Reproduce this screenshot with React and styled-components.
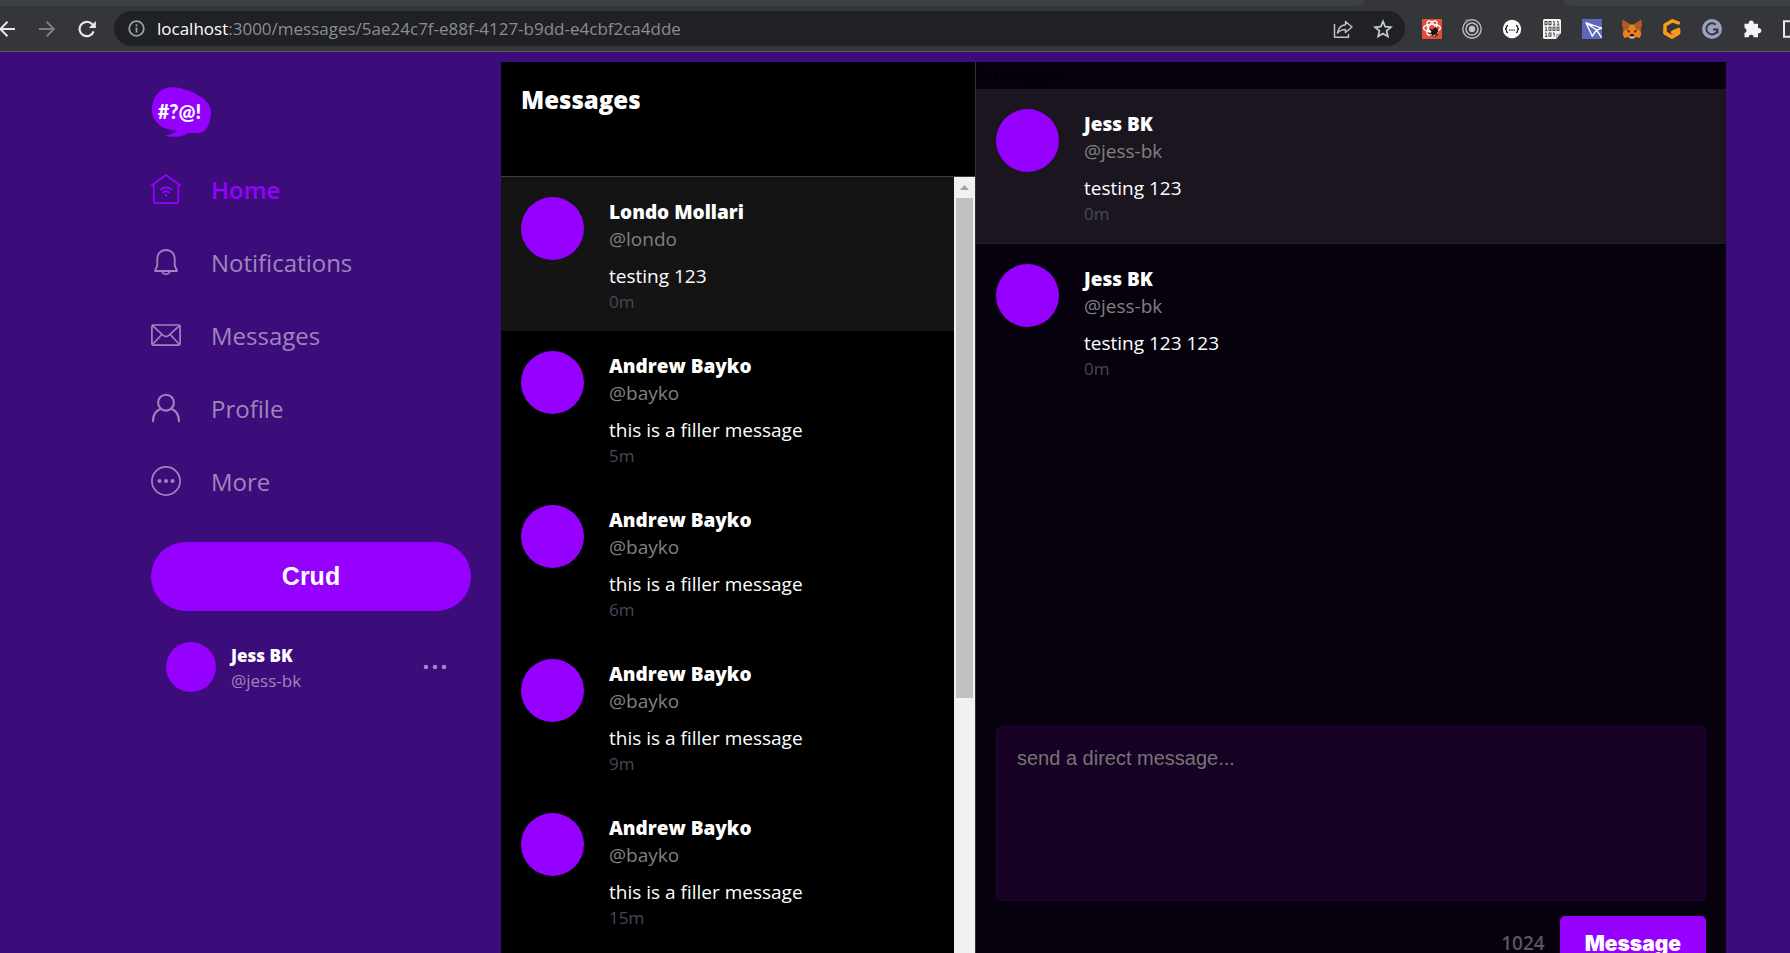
import React from "react";
import styled, { createGlobalStyle } from "styled-components";

const SANS = `"Segoe UI", "Open Sans", "Noto Sans", sans-serif`;
const ARIAL = `Arial, "Liberation Sans", sans-serif`;
const PURPLE = "#9500ff";

const GlobalStyle = createGlobalStyle`
  *, *::before, *::after { box-sizing: border-box; }
  body {
    margin: 0;
    overflow: hidden;
    background: #3c0c7a;
    font-family: ${SANS};
    font-size: 19px;
    line-height: 27px;
    color: #000;
  }
  h1, h2, p { margin: 0; }
  button { border: 0; padding: 0; background: none; cursor: pointer; }
  svg { display: block; flex: none; }
`;

/* ---------- browser chrome ---------- */

const Chrome = styled.header`
  background: #35363a;
  border-bottom: 1px solid #5f6064;
`;

const TabStrip = styled.div`
  display: grid;
  grid-template-columns: 1365fr 198fr 227fr;
  height: 6px;
`;

const InactiveTabs = styled.div`
  background: #3c4043;
  border-radius: ${(p) => (p.$side === "left" ? "0 0 8px 0" : "0 0 0 8px")};
`;

const Toolbar = styled.div`
  display: flex;
  align-items: center;
  height: 45px;
`;

const NavButtons = styled.div`
  display: flex;
  gap: 22px;
  margin-right: 18px;
`;

const IconButton = styled.button`
  color: ${(p) => p.$color || "#e8eaed"};
`;

const AddressBar = styled.div`
  flex: 1;
  min-width: 0;
  display: flex;
  align-items: center;
  height: 35px;
  padding: 0 12px 0 14px;
  border-radius: 18px;
  background: #202124;
  color: #9aa0a6;
`;

const Url = styled.p`
  flex: 1;
  min-width: 0;
  margin-left: 12px;
  overflow: hidden;
  white-space: nowrap;
  font-size: 17px;
  line-height: 24px;
  color: #8b8d90;
`;

const Host = styled.span`
  color: #fff;
`;

const AddressActions = styled.div`
  display: flex;
  gap: 20px;
`;

const Extensions = styled.div`
  display: flex;
  gap: 20px;
  margin-left: 17px;
`;

/* ---------- page ---------- */

const Page = styled.div`
  height: 100vh;
  overflow: hidden;
`;

const Columns = styled.div`
  display: grid;
  grid-template-columns: minmax(0, 437fr) minmax(0, 474fr) minmax(0, 751fr);
  height: calc(100vh - 32px);
  margin: 10px 64px 0;
`;

const Sidebar = styled.aside`
  padding: 25px 30px 0 87px;
`;

const Nav = styled.nav`
  display: flex;
  flex-direction: column;
  margin-top: 16px;
`;

const NavLink = styled.a`
  display: flex;
  align-items: center;
  gap: 30px;
  height: 73px;
  font-size: 24px;
  font-weight: ${(p) => (p.$active ? 600 : 400)};
  color: ${(p) => (p.$active ? PURPLE : "#9e86bc")};
  text-decoration: none;

  svg { margin-bottom: 2px; }
`;

const PostButton = styled.button`
  width: 100%;
  height: 69px;
  margin-top: 24px;
  border-radius: 35px;
  background: ${PURPLE};
  color: #fff;
  font: bold 25px/27px ${ARIAL};
`;

const Account = styled.div`
  display: flex;
  align-items: center;
  gap: 15px;
  margin-top: 30px;
  padding: 0 24px 0 15px;
`;

const Avatar = styled.div`
  flex: none;
  width: ${(p) => p.$size}px;
  height: ${(p) => p.$size}px;
  border-radius: 50%;
  background: ${PURPLE};
`;

const Details = styled.div`
  flex: 1;
  min-width: 0;
  padding-top: 2px;
`;

const AccountDetails = styled(Details)`
  font-size: 17px;
  line-height: 25px;
`;

const Name = styled.p`
  font-weight: 800;
  color: #fff;
`;

const Handle = styled.p`
  color: ${(p) => p.$color || "#808080"};
`;

const Inbox = styled.section`
  display: flex;
  flex-direction: column;
  min-height: 0;
  background: #000;
`;

const InboxHeader = styled.header`
  flex: none;
  height: 115px;
  padding: 20px;
  border-bottom: 1px solid #38404d;
`;

const InboxTitle = styled.h1`
  font-size: 24px;
  line-height: 36px;
  font-weight: 800;
  color: #fff;
`;

const InboxBody = styled.div`
  flex: 1;
  min-height: 0;
  display: flex;
`;

const List = styled.ul`
  flex: 1;
  min-width: 0;
  margin: 0;
  padding: 0;
  overflow: hidden;
  list-style: none;
`;

const Item = styled.li`
  display: flex;
  gap: 25px;
  padding: 20px 20px 18px;
  background: ${(p) => p.$bg || "transparent"};
  border-bottom: ${(p) => (p.$divider ? "1px solid #201e2e" : "0")};
`;

const Body = styled.p`
  margin-top: 10px;
  color: #fff;
`;

const Time = styled.p`
  font-size: 17px;
  line-height: 23px;
  color: #434a59;
`;

const ScrollTrack = styled.div`
  flex: none;
  width: 21px;
  padding: 0 2px;
  background: #f1f1f1;
`;

const ScrollArrow = styled.div`
  display: flex;
  align-items: center;
  justify-content: center;
  height: 21px;
`;

const ScrollThumb = styled.div`
  height: 62%;
  background: #c1c1c1;
`;

const Chat = styled.section`
  display: flex;
  flex-direction: column;
  min-height: 0;
  background: #07010d;
  border-left: 1px solid #2e3240;
`;

const ChatTitle = styled.h2`
  font-size: 19px;
  line-height: 27px;
  font-weight: 400;
`;

const Composer = styled.form`
  display: flex;
  flex-direction: column;
  gap: 15px;
  padding: 0 20px 12px;
`;

const MessageBox = styled.textarea`
  display: block;
  width: 100%;
  height: 175px;
  padding: 20px;
  border: 1px solid #220038;
  border-radius: 5px;
  background: #170124;
  color: #fff;
  font: 20px/23px ${ARIAL};
  resize: none;
  &::placeholder { color: #757575; }
`;

const ComposerActions = styled.div`
  display: flex;
  align-items: center;
  justify-content: flex-end;
  gap: 15px;
`;

const Counter = styled.span`
  font-weight: 600;
  color: #5a565f;
`;

const SendButton = styled.button`
  height: 55px;
  padding: 0 25px;
  border-radius: 5px;
  background: ${PURPLE};
  color: #fff;
  font: 900 21px/27px "Arial Black", Inter, sans-serif;
`;

/* ---------- icons ---------- */

const NavSvg = ({ children, width = 1.8 }) => (
  <svg width="30" height="30" viewBox="0 0 30 30" fill="none" stroke="currentColor" strokeWidth={width} strokeLinecap="round" strokeLinejoin="round" aria-hidden="true">
    {children}
  </svg>
);

const HomeIcon = () => (
  <NavSvg>
    <path d="M.8 11.3 15 1l14.2 10.300M2.700 10.300v17.200a1.700 1.700 0 0 0 1.700 1.700h21.200a1.700 1.700 0 0 0 1.700-1.700V10.300" />
    <path d="M9.500 15.600a8.200 8.200 0 0 1 11 0M12 18.600a4.600 4.600 0 0 1 6 0" />
    <circle cx="15" cy="21.400" r="1.300" fill="currentColor" stroke="none" />
  </NavSvg>
);

const BellIcon = () => (
  <NavSvg>
    <path d="M15 3C9.500 3 6.300 6.700 6.300 12v5.500c0 3-2.200 4.200-2.200 6.500h21.800c0-2.300-2.200-3.500-2.200-6.500V12C23.700 6.700 20.500 3 15 3Z" />
    <path d="M11.300 24.300a3.700 2.900 0 0 0 7.400 0" />
  </NavSvg>
);

const MailIcon = () => (
  <NavSvg width={1.7}>
    <rect x=".9" y="5" width="28.200" height="20.200" rx="1.600" />
    <path d="m1.500 5.700 10.700 9.600q2.800 2.400 5.600 0l10.700-9.600M1.500 24.500l9.300-10M28.500 24.500l-9.300-10" />
  </NavSvg>
);

const ProfileIcon = () => (
  <NavSvg width={2.1}>
    <circle cx="15" cy="9.700" r="7.900" />
    <path d="M2 28.300c0-6 3.200-10.800 7.800-12.600M28 28.300c0-6-3.200-10.800-7.800-12.600" />
  </NavSvg>
);

const MoreIcon = () => (
  <NavSvg width={1.7}>
    <circle cx="15" cy="15" r="14.100" />
    <g fill="currentColor" stroke="none">
      <circle cx="8.500" cy="15" r="2" />
      <circle cx="15" cy="15" r="2" />
      <circle cx="21.500" cy="15" r="2" />
    </g>
  </NavSvg>
);

const Logo = () => (
  <svg width="61" height="50" viewBox="63 51 183 150" role="img" aria-label="Crud">
    <path fill={PURPLE} d="M66 122C65 78 93 52 128 52c38 0 115 32 115 72 0 22-8 61-31 64-12 2-24 1-36 0-16 12-46 16-70 9 16-3 28-8 34-16-41 0-73-24-74-59Z" />
    <text x="83" y="148" fill="#fff" fontFamily="Lato, sans-serif" fontWeight="900" fontSize="60">#?@!</text>
  </svg>
);

const DotsIcon = () => (
  <svg width="24" height="6" viewBox="0 0 24 6" fill="#9e86bc" aria-hidden="true">
    <circle cx="3" cy="3" r="2.300" />
    <circle cx="12" cy="3" r="2.300" />
    <circle cx="21" cy="3" r="2.300" />
  </svg>
);

const Ext = ({ children, w = 20 }) => (
  <svg width={w} height="20" viewBox={`0 0 ${w} 20`} fill="none" aria-hidden="true">
    {children}
  </svg>
);

const ReactBugIcon = () => (
  <Ext>
    <rect width="20" height="20" fill="#e04f3d" />
    <g stroke="#fff" strokeWidth="1.300">
      <ellipse cx="10" cy="9" rx="8.500" ry="3.600" />
      <ellipse cx="10" cy="9" rx="8" ry="3.600" transform="rotate(60 10 9)" />
      <ellipse cx="10" cy="9" rx="8" ry="3.600" transform="rotate(120 10 9)" />
    </g>
    <ellipse cx="12.500" cy="12.500" rx="2.900" ry="4" transform="rotate(40 12.500 12.500)" fill="#1c1313" />
    <path d="m8 10 8 6M14 8l-4 9M16 11l-8 4M13 18l2-3" stroke="#1c1313" strokeWidth="1.200" />
  </Ext>
);

const TargetIcon = () => (
  <Ext>
    <circle cx="10" cy="10" r="9.200" stroke="#bdbdbd" strokeWidth="1.400" />
    <circle cx="10" cy="10" r="6" stroke="#bdbdbd" strokeWidth="1.600" />
    <circle cx="10" cy="10" r="3.200" fill="#c4c4c4" />
    <circle cx="5" cy="2" r="1.800" fill="#8a8b8c" />
  </Ext>
);

const JsonIcon = () => (
  <Ext>
    <circle cx="10" cy="10" r="9.200" fill="#fff" />
    <path d="M6 6.500q-1.500 0-1.500 1.600T3.200 10q1.300.3 1.300 1.900T6 13.500M14 6.500q1.500 0 1.500 1.600t1.300 1.900q-1.300.3-1.300 1.900T14 13.500" stroke="#222" strokeWidth="1.300" />
    <path d="M7.200 11h1.200M9.400 11h1.200M11.600 11h1.200" stroke="#222" strokeWidth="1.300" />
  </Ext>
);

const BinaryIcon = () => (
  <Ext>
    <path d="M2.500 0h15A1.500 1.500 0 0 1 19 1.500V14l-5 6H2.500A1.500 1.500 0 0 1 1 18.500v-17A1.500 1.500 0 0 1 2.500 0Z" fill="#f4f4f1" />
    <path d="m19 14-5 6v-5Z" fill="#b5b5b5" />
    <g stroke="#3a3a3a" strokeWidth=".9">
      <rect x="3" y="2.500" width="2" height="3.200" />
      <rect x="7" y="2.500" width="2" height="3.200" />
      <path d="M11 2.500h1.200v3.500M11 6h2.400M15 2.500h1.200v3.500M15 6h2.400" />
      <path d="M3 8.200h1.200v3.500M3 11.700h2.400" />
      <rect x="7" y="8.200" width="2" height="3.200" />
      <rect x="11" y="8.200" width="2" height="3.200" />
      <rect x="15" y="8.200" width="2" height="3.200" />
      <path d="M3 14h1.200v3.500M3 17.500h2.400M11 14h1.200v3.500" />
      <rect x="7" y="14" width="2" height="3.200" />
    </g>
  </Ext>
);

const PlaneIcon = () => (
  <Ext>
    <rect width="20" height="20" fill="#5b68bd" />
    <path d="m4 3.800 16 5.400M4 3.800l6.300 13.400L14.500 11 4 3.800ZM14.500 11l5.500-2M14.500 11l5 7.500" stroke="#fff" strokeWidth="1.400" strokeLinejoin="round" />
  </Ext>
);

const FoxIcon = () => (
  <Ext>
    <path d="m1 .8 7 4.700h4L19 .8l.6 5-1.200 5.700 1 3.500-1.600 4-4-1-2 1.500H8.200l-2-1.500-4 1L.6 15l1-3.500L.4 5.800Z" fill="#e8821e" />
    <path d="m1 .8 7 4.700-2 4.500-4.400 1.500L.4 5.800ZM19 .8l-7 4.700 2 4.500 4.400 1.500 1.200-5.700Z" fill="#b35a1f" />
    <path d="m4.500 11 3.500.5-.8 2.500Zm11 0-3.500.5.800 2.500Z" fill="#2a2f38" />
    <path d="m8 15.700.5-.7h3l.5.7v1.800H8Z" fill="#16181c" />
    <path d="M7.200 17.500h5.600l-1 2H8.200Z" fill="#c9b9a8" />
  </Ext>
);

const HoneyIcon = () => (
  <Ext>
    <path d="M16.500 4 10.500 1.800 3 6v8l7 4 6.500-4v-3.500l-6 2.800" stroke="#f9a01b" strokeWidth="3.400" strokeLinejoin="round" strokeLinecap="round" />
    <path d="M3 12.500V14l7 4 6.500-4v-3.500" stroke="#ff961f" strokeWidth="3.400" strokeLinejoin="round" strokeLinecap="round" />
  </Ext>
);

const GrammarIcon = () => (
  <Ext>
    <circle cx="10" cy="10" r="10" fill="#9aa2c0" />
    <path d="M13.800 5.800A5.600 5.600 0 1 0 15.500 10.500H11M15.500 10.500v4" stroke="#35363a" strokeWidth="1.900" />
  </Ext>
);

const PuzzleIcon = () => (
  <Ext>
    <path d="M2.500 4.800h4.200a2.600 2.600 0 1 1 5 0h4.300v4.400a2.600 2.600 0 1 1 0 5V18.300h-4.300a2.500 2.500 0 0 0-5 0H2.500v-4.400a2.500 2.500 0 0 0 0-4.900Z" fill="#f1f3f4" />
  </Ext>
);

const PanelIcon = () => (
  <Ext w={8}>
    <path d="M9 2.200H2v15.500h7" stroke="#e8eaed" strokeWidth="2" />
  </Ext>
);

const BackIcon = () => (
  <svg width="16" height="18" viewBox="0 0 16 18" fill="none" stroke="currentColor" strokeWidth="2" aria-hidden="true">
    <path d="M15 9H.5M7.500 1.800.3 9l7.200 7.200" />
  </svg>
);

const ForwardIcon = () => (
  <svg width="18" height="18" viewBox="0 0 18 18" fill="none" stroke="currentColor" strokeWidth="2" aria-hidden="true">
    <path d="M.8 9H16M8.700 1.800 15.900 9l-7.200 7.200" />
  </svg>
);

const ReloadIcon = () => (
  <svg width="18" height="18" viewBox="0 0 18 18" fill="none" aria-hidden="true">
    <path d="M15.600 11.300A7.200 7.200 0 1 1 14 4l1.500 1.500" stroke="currentColor" strokeWidth="2.200" />
    <path d="M17.800 1v7h-7Z" fill="currentColor" />
  </svg>
);

const InfoIcon = () => (
  <svg width="17" height="17" viewBox="0 0 17 17" fill="none" stroke="currentColor" strokeWidth="1.800" aria-hidden="true">
    <circle cx="8.500" cy="8.500" r="7.300" />
    <path d="M8.500 7.500v5M8.500 4.300v1.900" />
  </svg>
);

const ShareIcon = () => (
  <svg width="20" height="20" viewBox="0 0 20 20" fill="none" stroke="#bdc1c6" strokeWidth="1.500" strokeLinejoin="round" aria-hidden="true">
    <path d="M1.500 5v13.200h14V15" />
    <path d="M12.500 2.500 19 8l-6.500 5.500V10.500c-4 0-6 1.300-8 3.500.8-4.500 3.500-7.800 8-8.200Z" />
  </svg>
);

const StarIcon = () => (
  <svg width="20" height="20" viewBox="0 0 20 20" fill="none" stroke="#c8cbcf" strokeWidth="1.700" strokeLinejoin="miter" aria-hidden="true">
    <path d="m10 2.300 2.200 5.300 5.800.5-4.400 3.800 1.300 5.600-4.900-3-4.900 3 1.300-5.600L2 8.100l5.800-.5Z" />
  </svg>
);

/* ---------- content ---------- */

const navItems = [
  { label: "Home", Icon: HomeIcon, active: true },
  { label: "Notifications", Icon: BellIcon },
  { label: "Messages", Icon: MailIcon },
  { label: "Profile", Icon: ProfileIcon },
  { label: "More", Icon: MoreIcon },
];

const filler = (time) => ({ name: "Andrew Bayko", handle: "@bayko", body: "this is a filler message", time });

const conversations = [
  { name: "Londo Mollari", handle: "@londo", body: "testing 123", time: "0m", bg: "#141414" },
  filler("5m"),
  filler("6m"),
  filler("9m"),
  filler("15m"),
];

const thread = [
  { name: "Jess BK", handle: "@jess-bk", body: "testing 123", time: "0m", bg: "#1b1520" },
  { name: "Jess BK", handle: "@jess-bk", body: "testing 123 123", time: "0m" },
];

const MessageItem = ({ message, divider }) => (
  <Item $bg={message.bg} $divider={divider}>
    <Avatar $size={63} />
    <Details>
      <Name>{message.name}</Name>
      <Handle>{message.handle}</Handle>
      <Body>{message.body}</Body>
      <Time>{message.time}</Time>
    </Details>
  </Item>
);

const BrowserBar = () => (
  <Chrome>
    <TabStrip>
      <InactiveTabs $side="left" />
      <div />
      <InactiveTabs $side="right" />
    </TabStrip>
    <Toolbar>
      <NavButtons>
        <IconButton aria-label="Back"><BackIcon /></IconButton>
        <IconButton aria-label="Forward" $color="#7d7e81"><ForwardIcon /></IconButton>
        <IconButton aria-label="Reload"><ReloadIcon /></IconButton>
      </NavButtons>
      <AddressBar>
        <InfoIcon />
        <Url><Host>localhost</Host>:3000/messages/5ae24c7f-e88f-4127-b9dd-e4cbf2ca4dde</Url>
        <AddressActions>
          <IconButton aria-label="Share"><ShareIcon /></IconButton>
          <IconButton aria-label="Bookmark"><StarIcon /></IconButton>
        </AddressActions>
      </AddressBar>
      <Extensions>
        <ReactBugIcon />
        <TargetIcon />
        <JsonIcon />
        <BinaryIcon />
        <PlaneIcon />
        <FoxIcon />
        <HoneyIcon />
        <GrammarIcon />
        <PuzzleIcon />
        <PanelIcon />
      </Extensions>
    </Toolbar>
  </Chrome>
);

export default function App() {
  return (
    <Page>
      <GlobalStyle />
      <BrowserBar />
      <Columns>
        <Sidebar>
          <Logo />
          <Nav>
            {navItems.map(({ label, Icon, active }) => (
              <NavLink key={label} href="#" $active={active}>
                <Icon />
                {label}
              </NavLink>
            ))}
          </Nav>
          <PostButton type="button">Crud</PostButton>
          <Account>
            <Avatar $size={50} />
            <AccountDetails>
              <Name>Jess BK</Name>
              <Handle $color="#9e86bc">@jess-bk</Handle>
            </AccountDetails>
            <IconButton aria-label="Account options"><DotsIcon /></IconButton>
          </Account>
        </Sidebar>

        <Inbox>
          <InboxHeader>
            <InboxTitle>Messages</InboxTitle>
          </InboxHeader>
          <InboxBody>
            <List>
              {conversations.map((message) => (
                <MessageItem key={message.time} message={message} />
              ))}
            </List>
            <ScrollTrack>
              <ScrollArrow>
                <svg width="9" height="5" viewBox="0 0 9 5" aria-hidden="true">
                  <path d="M0 5 4.500 0 9 5Z" fill="#a3a3a3" />
                </svg>
              </ScrollArrow>
              <ScrollThumb />
            </ScrollTrack>
          </InboxBody>
        </Inbox>

        <Chat>
          <ChatTitle>Messages</ChatTitle>
          <List>
            {thread.map((message, index) => (
              <MessageItem key={message.body} message={message} divider={index === 0} />
            ))}
          </List>
          <Composer>
            <MessageBox aria-label="Direct message" placeholder="send a direct message..." />
            <ComposerActions>
              <Counter>1024</Counter>
              <SendButton type="button">Message</SendButton>
            </ComposerActions>
          </Composer>
        </Chat>
      </Columns>
    </Page>
  );
}
